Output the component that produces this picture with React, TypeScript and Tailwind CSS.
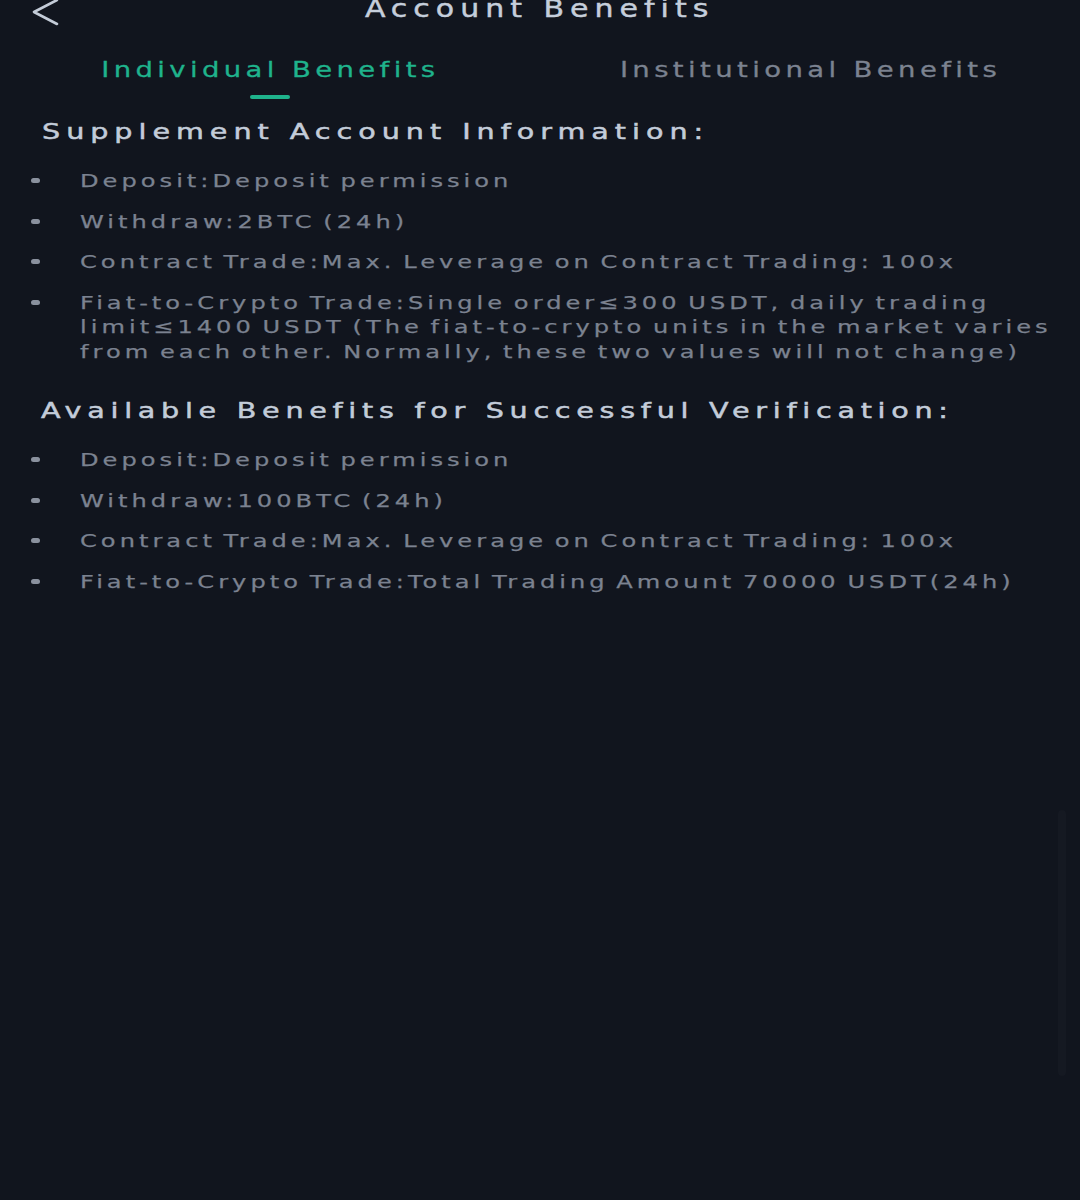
const supplement = [
  'Deposit:Deposit permission',
  'Withdraw:2BTC (24h)',
  'Contract Trade:Max. Leverage on Contract Trading: 100x',
  'Fiat-to-Crypto Trade:Single order≤300 USDT, daily trading limit≤1400 USDT (The fiat-to-crypto units in the market varies from each other. Normally, these two values will not change)',
];

const verified = [
  'Deposit:Deposit permission',
  'Withdraw:100BTC (24h)',
  'Contract Trade:Max. Leverage on Contract Trading: 100x',
  'Fiat-to-Crypto Trade:Total Trading Amount 70000 USDT(24h)',
];

// The app's typeface is a wide one; DejaVu is widened with scale-x to get close.
function BenefitList({ items }: { items: string[] }) {
  return (
    <ul className="flex flex-col gap-[16px] pl-[31px]">
      {items.map(item => (
        <li key={item} className="flex text-[18px] leading-[24.5px] tracking-[3px] [word-spacing:-3px] text-[#7b8290] [-webkit-text-stroke:0.25px_#7b8290]">
          <span className="w-[49px] shrink-0 pt-[9px]">
            <span className="block h-[5px] w-[9px] rounded-full bg-[#8a919e]" />
          </span>
          <span className="block w-[745px] origin-left scale-x-[1.34]">{item}</span>
        </li>
      ))}
    </ul>
  );
}

export default function App() {
  return (
    <div className="relative min-h-[1200px] bg-[#11151e] font-['DejaVu_Sans',sans-serif] overflow-hidden">
      <header className="relative h-[26px] -mt-[5px] flex items-center justify-center">
        <svg className="absolute left-[31px] top-[3px]" width="30" height="28" viewBox="0 0 30 28" fill="none">
          <path d="M26 2 L3 14 L26 26" stroke="#c4ccd8" strokeWidth="2.6" strokeLinecap="round" strokeLinejoin="round" />
        </svg>
        <h1 className="scale-x-120 text-[25px] leading-none tracking-[5px] text-[#c5cedb] [-webkit-text-stroke:0.45px_#c5cedb]">Account Benefits</h1>
      </header>

      <nav className="grid grid-cols-2 mt-[36px]">
        <div className="flex flex-col items-center">
          <span className="scale-x-125 text-[22px] leading-[26px] tracking-[3.5px] text-[#1fb38c] [-webkit-text-stroke:0.3px_#1fb38c]">Individual Benefits</span>
          <span className="mt-[12px] h-[4px] w-[40px] rounded-full bg-[#1fb38c]" />
        </div>
        <div className="flex flex-col items-center">
          <span className="scale-x-125 text-[22px] leading-[26px] tracking-[3.5px] text-[#7b8290] [-webkit-text-stroke:0.3px_#7b8290]">Institutional Benefits</span>
        </div>
      </nav>

      <section className="mt-[18px]">
        <h2 className="px-[42px]">
          <span className="inline-block origin-left scale-x-130 text-[22px] leading-[30px] tracking-[4.6px] text-[#c3ccd9] [-webkit-text-stroke:0.5px_#c3ccd9]">Supplement Account Information:</span>
        </h2>
        <div className="mt-[22px]">
          <BenefitList items={supplement} />
        </div>
      </section>

      <section className="mt-[32px]">
        <h2 className="px-[41px]">
          <span className="inline-block origin-left scale-x-130 text-[22px] leading-[30px] tracking-[4.4px] text-[#c3ccd9] [-webkit-text-stroke:0.5px_#c3ccd9]">Available Benefits for Successful Verification:</span>
        </h2>
        <div className="mt-[22px]">
          <BenefitList items={verified} />
        </div>
      </section>

      <div className="absolute right-[14px] top-[810px] h-[266px] w-[8px] rounded-full bg-[#151922]" />
    </div>
  );
}
